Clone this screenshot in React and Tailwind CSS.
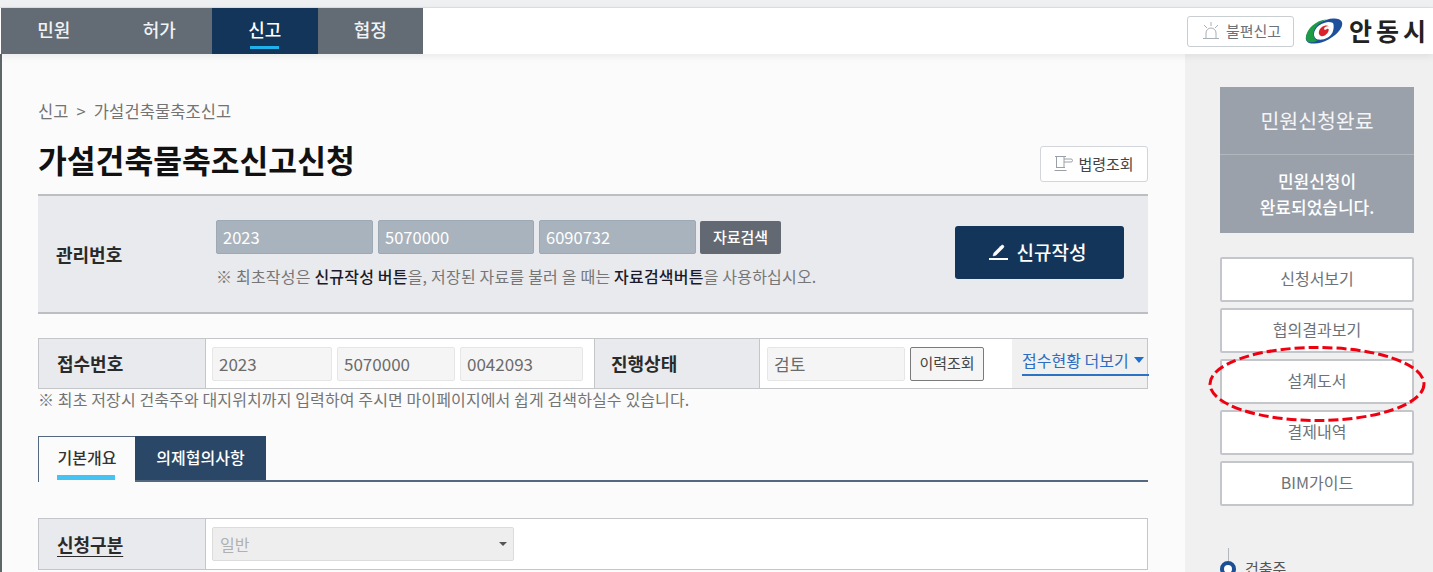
import { Pencil } from 'lucide-react';

const FONT = '[font-family:"Noto_Sans_CJK_KR","Noto_Sans",sans-serif]';

function Logo() {
  return (
    <svg width="40" height="26" viewBox="0 0 40 26" className="shrink-0">
      <ellipse cx="20" cy="13" rx="20" ry="9.500" transform="rotate(-28 20 13)" fill="#1d4f9c" />
      <path d="M3.500 23.500C-1 19 5 6 18 2.200c1.500-.4 3-.6 4.500-.6C14 5 9 11 9.500 17c.2 2.500 1.500 4.500 4 5.500-3.500 2-8 2.500-10 1z" fill="#1f9a46" />
      <path d="M14 21.500C8 20 9 12 15 7.500c5-3.500 11-4.500 14-2.500-4-.5-4 0-5 1-6 1-11 6-11 11 0 2 1 3.500 1 4.500z" fill="#fff" />
      <path d="M14 21.500c6 .8 12-2 14.500-7 1.500-3.500 1.500-7.500.5-9.500-3-1.500-9 0-13 3.500C10 13 10 20 14 21.500z" fill="#fff" />
      <path d="M17 18c-3.500-1.500-2.500-6.500 1-9 2.500-1.800 5.500-2 7-.5-2.500-.8-5 .8-5 2.500 0 1 1.500 1 2.500.2 1.800-1 2.800 0 2 1.800-1 3-4.500 6-7.500 5z" fill="#d8232a" />
    </svg>
  );
}

function SirenIcon() {
  return (
    <svg width="22" height="22" viewBox="0 0 22 22" fill="none" stroke="#a9afb6" strokeWidth="1" className="shrink-0">
      <path d="M6 18v-5a5 5 0 0 1 10 0v5M3 18.500h16M11 2v4M4 5l3 3M18 5l-3 3" />
    </svg>
  );
}

function GavelIcon() {
  return (
    <svg width="20" height="18" viewBox="0 0 20 18" fill="none" stroke="#9aa0a7" strokeWidth="1" className="shrink-0">
      <path d="M1 1.500h11M2.500 1.500v11M10 1.500v11M10 4h7a1.500 1.500 0 0 1 0 3h-7M2 12.500h9M.5 15.500h12" />
    </svg>
  );
}

function SideButton({ children }) {
  return (
    <button className="h-[45px] w-[194px] rounded-[2px] border-2 border-[#c3c7cc] bg-white pb-[3px] text-[16px] text-[#6d7278]">
      {children}
    </button>
  );
}

function Field({ value, className }) {
  return (
    <div className={`flex h-[34px] items-center rounded-[2px] border border-[#e6e6e6] bg-[#f5f5f5] px-[6px] text-[17px] text-[#6b6b6b] ${className}`}>
      {value}
    </div>
  );
}

function LockedField({ value, className }) {
  return (
    <div className={`flex h-[34px] items-center rounded-[2px] border border-[#9daab6] bg-[#a9b3bd] pl-[6px] text-[16.500px] text-white ${className}`}>
      {value}
    </div>
  );
}

export default function App() {
  return (
    <div className={`relative flex h-[572px] flex-col overflow-hidden bg-[#fbfbfb] ${FONT}`}>
      <div className="h-[8px] border-b border-[#dfe1e4] bg-[#eff0f2]" />

      {/* Header */}
      <header className="relative z-10 flex h-[46px] items-stretch justify-between bg-white pl-[1px] shadow-[0_2px_8px_rgba(0,0,0,0.08)]">
        <nav className="flex bg-[#636b75] text-[18px] font-medium">
          {['민원', '허가', '신고', '협정'].map((label) => (
            <div
              key={label}
              className={`relative flex w-[105.5px] items-center justify-center pb-[3px] ${label === '신고' ? 'bg-[#14355a] text-white' : 'text-[#f1f2f3]'}`}
            >
              {label}
              {label === '신고' && <span className="absolute bottom-[5px] h-[3px] w-[29px] bg-[#1eb1ec]" />}
            </div>
          ))}
        </nav>
        <div className="flex items-center pr-[3px]">
          <button className="mr-[10px] flex h-[31px] w-[107px] items-center justify-center gap-[4px] rounded-[3px] border border-[#c9ced3] bg-white text-[15px] text-[#6d7278]">
            <SirenIcon />
            불편신고
          </button>
          <Logo />
          <span className="ml-[5px] text-[25px] font-bold tracking-[4px] text-[#222]">안동시</span>
        </div>
      </header>

      <div className="flex min-h-0 flex-1">
        {/* Main */}
        <main className="w-[1185px] shrink-0 border-l-2 border-[#5f6668] pl-[36px] pr-[37px] pt-[45px]">
          <div className="flex h-[24px] items-center gap-[8px] text-[16.500px] tracking-[0.1px] text-[#737373]">
            <span>신고</span>
            <span>&gt;</span>
            <span>가설건축물축조신고</span>
          </div>

          <div className="mt-[11px] flex h-[48px] items-end justify-between">
            <h1 className="mb-[7px] text-[31.300px] font-bold leading-none text-[#111]">가설건축물축조신고신청</h1>
            <button className="flex h-[36px] w-[108px] items-center justify-center gap-[4px] rounded-[3px] border border-[#d2d5d9] bg-white text-[15px] text-[#444]">
              <GavelIcon />
              법령조회
            </button>
          </div>

          {/* 관리번호 */}
          <section className="mt-[12px] flex h-[120px] items-center border-y-2 border-[#bcbec2] bg-[#e9eaee] pl-[18px] pr-[24px]">
            <div className="w-[160px] shrink-0 text-[18px] font-bold text-[#2a2a2a]">관리번호</div>
            <div className="flex-1">
              <div className="flex items-center">
                <LockedField value="2023" className="w-[157px]" />
                <LockedField value="5070000" className="ml-[5px] w-[156px]" />
                <LockedField value="6090732" className="ml-[5px] w-[157px]" />
                <button className="ml-[4px] h-[33px] w-[81px] rounded-[2px] bg-[#626972] text-[15px] font-medium text-white">자료검색</button>
              </div>
              <p className="mt-[10px] text-[16px] tracking-[0.2px] text-[#767676]">
                ※ 최초작성은 <b className="font-medium text-[#1a1a2a]">신규작성 버튼</b>을, 저장된 자료를 불러 올 때는{' '}
                <b className="font-medium text-[#1a1a2a]">자료검색버튼</b>을 사용하십시오.
              </p>
            </div>
            <button className="mb-[4px] flex h-[53px] w-[169px] shrink-0 items-center justify-center gap-[9px] rounded-[3px] bg-[#14355a] pr-[4px] text-[19px] font-medium text-white">
              <span className="flex flex-col items-center">
                <Pencil size={13} fill="white" strokeWidth={1} />
                <span className="mt-[1px] h-[2px] w-[19px] bg-white" />
              </span>
              신규작성
            </button>
          </section>

          {/* 접수번호 */}
          <section className="mt-[24px] flex h-[51px] border border-[#c4c6ca] bg-white">
            <div className="flex w-[167px] shrink-0 items-center border-r border-[#c4c6ca] bg-[#e9eaee] pl-[18px] text-[18px] font-bold text-[#2a2a2a]">접수번호</div>
            <div className="flex w-[388px] shrink-0 items-center pl-[6px]">
              <Field value="2023" className="w-[120px]" />
              <Field value="5070000" className="ml-[5px] w-[118px]" />
              <Field value="0042093" className="ml-[5px] w-[123px]" />
            </div>
            <div className="flex w-[166px] shrink-0 items-center border-x border-[#c4c6ca] bg-[#e9eaee] pl-[16px] text-[18px] font-bold text-[#2a2a2a]">진행상태</div>
            <div className="flex w-[252px] shrink-0 items-center pl-[7px]">
              <Field value="검토" className="w-[138px]" />
              <button className="ml-[5px] h-[34px] w-[74px] rounded-[2px] border border-[#7a7a7a] bg-[#f5f5f5] text-[15px] text-[#444]">이력조회</button>
            </div>
            <div className="relative flex-1 bg-[#f0f0f0]">
              <div className="absolute -right-[2px] left-[10px] top-[9px] flex h-[28px] items-center border-b-2 border-[#2c73c4] pb-[3px] text-[16px] text-[#2d6cc0]">
                접수현황 더보기
                <span className="ml-[5px] h-0 w-0 border-x-[5px] border-t-[6px] border-x-transparent border-t-[#1f6fd0]" />
              </div>
            </div>
          </section>
          <p className="text-[16px] leading-[20px] tracking-[0.12px] text-[#747474]">
            ※ 최초 저장시 건축주와 대지위치까지 입력하여 주시면 마이페이지에서 쉽게 검색하실수 있습니다.
          </p>

          {/* 탭 */}
          <div className="mt-[27px] flex h-[46px] border-b-2 border-[#54687f]">
            <div className="relative flex h-[46px] w-[97px] items-start justify-center border-x border-t border-[#54687f] border-r-0 bg-[#fbfbfb] pt-[8px] text-[16px] font-medium text-[#333]">
              기본개요
              <span className="absolute bottom-[2px] left-[18px] h-[5px] w-[58px] bg-[#45c3f2]" />
            </div>
            <div className="flex h-[44px] w-[131px] items-start justify-center bg-[#2a4767] pt-[9px] text-[16px] font-medium text-white">
              의제협의사항
            </div>
          </div>

          {/* 신청구분 */}
          <section className="mt-[36px] flex h-[52px] border border-[#c4c6ca] bg-white">
            <div className="flex w-[167px] shrink-0 items-center border-r border-[#c4c6ca] bg-[#e9eaee] pl-[18px] text-[18px] font-bold text-[#2a2a2a] underline underline-offset-4">신청구분</div>
            <div className="flex items-center pl-[6px]">
              <div className="flex h-[34px] w-[302px] items-center justify-between rounded-[2px] border border-[#dcdcdc] bg-[#eeeeee] pl-[7px] pr-[6px] text-[16px] text-[#b0b0b0]">
                일반
                <span className="h-0 w-0 border-x-[4px] border-t-[4px] border-x-transparent border-t-[#555]" />
              </div>
            </div>
          </section>
        </main>

        {/* Sidebar */}
        <aside className="flex flex-1 flex-col items-start bg-[#f0f0f0] pl-[35px] pt-[33px]">
          <div className="w-[194px] bg-[#9aa1ab] text-white">
            <div className="flex h-[68px] items-center justify-center border-b border-[#b2b7be] text-[20.500px] text-[#f4f5f6]">민원신청완료</div>
            <div className="flex h-[78px] items-center justify-center text-center text-[17px] font-medium leading-[26px]">
              민원신청이
              <br />
              완료되었습니다.
            </div>
          </div>
          <div className="mt-[24px] flex flex-col gap-[6px]">
            <SideButton>신청서보기</SideButton>
            <SideButton>협의결과보기</SideButton>
            <SideButton>설계도서</SideButton>
            <SideButton>결제내역</SideButton>
            <SideButton>BIM가이드</SideButton>
          </div>
          <div className="mt-[42px] flex w-[194px] items-start">
            <div className="flex flex-col items-center">
              <span className="h-[13px] w-px bg-[#b5b8bc]" />
              <span className="h-[16px] w-[16px] rounded-full border-[4px] border-[#1c4f94] bg-white" />
            </div>
            <span className="ml-[9px] mt-[9px] text-[15px] text-[#555]">건축주</span>
          </div>
        </aside>
      </div>

      {/* 붉은 점선 강조 */}
      <svg className="pointer-events-none absolute left-[1207px] top-[345px] z-20" width="220" height="78" viewBox="0 0 220 78" fill="none">
        <ellipse cx="110" cy="39" rx="107" ry="36.500" stroke="#ee0011" strokeWidth="3" strokeDasharray="10 4" />
      </svg>
    </div>
  );
}
